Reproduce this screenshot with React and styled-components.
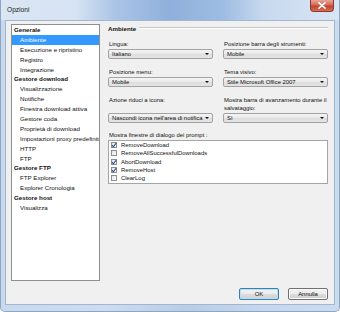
import styled, { createGlobalStyle } from 'styled-components';

const GlobalStyle = createGlobalStyle`
  html, body {
    margin: 0;
    padding: 0;
    background: #ffffff;
  }
  body {
    font-family: 'Liberation Sans', Arial, sans-serif;
  }
`

const tree = [
  { label: 'Generale', group: true },
  { label: 'Ambiente', selected: true },
  { label: 'Esecuzione e ripristino' },
  { label: 'Registro' },
  { label: 'Integrazione' },
  { label: 'Gestore download', group: true },
  { label: 'Visualizzazione' },
  { label: 'Notifiche' },
  { label: 'Finestra download attiva' },
  { label: 'Gestore coda' },
  { label: 'Proprietà di download' },
  { label: 'Impostazioni proxy predefinite' },
  { label: 'HTTP' },
  { label: 'FTP' },
  { label: 'Gestore FTP', group: true },
  { label: 'FTP Explorer' },
  { label: 'Explorer Cronologia' },
  { label: 'Gestore host', group: true },
  { label: 'Visualizza' },
]

const fields = [
  { label: 'Lingua:', value: 'Italiano' },
  { label: 'Posizione barra degli strumenti:', value: 'Mobile' },
  { label: 'Posizione menu:', value: 'Mobile' },
  { label: 'Tema visivo:', value: 'Stile Microsoft Office 2007' },
  { label: 'Azione riduci a icona:', value: "Nascondi icona nell'area di notifica" },
  { label: 'Mostra barra di avanzamento durante il salvataggio:', value: 'Sì' },
]

const prompts = [
  { label: 'RemoveDownload', checked: true },
  { label: 'RemoveAllSuccessfulDownloads', checked: false },
  { label: 'AbortDownload', checked: true },
  { label: 'RemoveHost', checked: true },
  { label: 'ClearLog', checked: false },
]

export default function App() {
  return (
    <>
      <GlobalStyle />
      <Window>
        <TitleBar>
          <Title>Opzioni</Title>
          <CloseButton>
            <svg width="8" height="7" viewBox="0 0 8 7">
              <path d="M1 0.8 L7 6.2 M7 0.8 L1 6.2" stroke="#ffffff" strokeWidth="1.6" strokeLinecap="round" />
            </svg>
          </CloseButton>
        </TitleBar>
        <Client>
          <Main>
            <Tree>
              {tree.map((item) => (
                <TreeRow key={item.label} $group={item.group} $selected={item.selected}>
                  {item.label}
                </TreeRow>
              ))}
            </Tree>
            <Panel>
              <SectionHeader>
                <span>Ambiente</span>
                <Rule />
              </SectionHeader>
              <FieldGrid>
                {fields.map((f) => (
                  <Field key={f.label}>
                    <Label>{f.label}</Label>
                    <Combo>
                      <span>{f.value}</span>
                      <Arrow />
                    </Combo>
                  </Field>
                ))}
              </FieldGrid>
              <ListLabel>Mostra finestre di dialogo dei prompt :</ListLabel>
              <CheckList>
                {prompts.map((p) => (
                  <CheckRow key={p.label}>
                    <Box>
                      {p.checked && (
                        <svg width="6" height="6" viewBox="0 0 6 6">
                          <path d="M1 3.2 L2.4 4.8 L5.2 1" stroke="#2a4f8c" strokeWidth="1.1" fill="none" />
                        </svg>
                      )}
                    </Box>
                    {p.label}
                  </CheckRow>
                ))}
              </CheckList>
            </Panel>
          </Main>
          <Footer>
            <Button $primary>OK</Button>
            <Button>Annulla</Button>
          </Footer>
        </Client>
      </Window>
    </>
  );
}

const Window = styled.div`
  width: 340px;
  height: 312px;
  box-sizing: border-box;
  display: flex;
  flex-direction: column;
  padding: 0 4px 6px 4px;
  background: linear-gradient(to right, #c9d9ee 0%, #cddcf0 30%, #b9cde8 55%, #c7d8ee 80%, #cbdbef 100%);
  border: 1px solid #8ea5c3;
  border-top: none;
  border-radius: 0 0 5px 5px;
`
const TitleBar = styled.div`
  height: 20px;
  display: flex;
  align-items: flex-start;
  justify-content: space-between;
  margin: 0 -4px;
  padding: 0 5px 0 6px;
  background: linear-gradient(to right, #dbe6f4 0%, #d6e3f3 22%, #aac4e6 34%, #8fb0dc 50%, #9fbde3 66%, #c8d9ef 78%, #d9e5f4 100%);
`
const Title = styled.div`
  font-size: 6.6px;
  line-height: 8px;
  margin-top: 6px;
  color: #1a1a1a;
`
const CloseButton = styled.div`
  width: 24px;
  height: 12px;
  box-sizing: border-box;
  display: flex;
  align-items: center;
  justify-content: center;
  background: linear-gradient(#e6a597 0%, #d56b55 45%, #c4412b 55%, #d2705a 100%);
  border: 1px solid #8c3a2e;
  border-top: none;
  border-radius: 0 0 4px 4px;
`
const Client = styled.div`
  flex: 1;
  display: flex;
  flex-direction: column;
  background: #f0f0f0;
  border: 1px solid #a2b6cf;
  padding: 2px 6px 4px 5px;
  font-size: 6.2px;
  color: #111111;
`
const Main = styled.div`
  flex: 1;
  display: flex;
  gap: 8px;
`
const Tree = styled.div`
  width: 89px;
  box-sizing: border-box;
  margin-top: 1px;
  background: #ffffff;
  border: 1px solid #8f8f8f;
  overflow: hidden;
`
const TreeRow = styled.div`
  height: 9.9px;
  line-height: 9.9px;
  white-space: nowrap;
  padding-left: ${(p) => (p.$group ? '2px' : '8px')};
  font-weight: ${(p) => (p.$group ? 'bold' : 'normal')};
  background: ${(p) => (p.$selected ? '#3399ff' : 'transparent')};
  color: ${(p) => (p.$selected ? '#ffffff' : '#111111')};
`
const Panel = styled.div`
  flex: 1;
  display: flex;
  flex-direction: column;
  font-size: 5.9px;
`
const SectionHeader = styled.div`
  display: flex;
  align-items: center;
  gap: 3px;
  height: 8px;
  font-size: 6.2px;
  font-weight: bold;
  margin-top: 1px;
`
const Rule = styled.div`
  flex: 1;
  height: 0;
  border-top: 1px solid #c8c8c8;
  border-bottom: 1px solid #ffffff;
`
const FieldGrid = styled.div`
  display: grid;
  grid-template-columns: 1fr 1fr;
  column-gap: 10px;
  row-gap: 9px;
  margin-top: 8px;
`
const Field = styled.div`
  display: flex;
  flex-direction: column;
`
const Label = styled.div`
  flex: 1;
  line-height: 8px;
  margin-bottom: 1px;
  padding-left: 1px;
`
const Combo = styled.div`
  position: relative;
  height: 10px;
  box-sizing: border-box;
  display: flex;
  align-items: center;
  padding-left: 3px;
  white-space: nowrap;
  overflow: hidden;
  border: 1px solid #a3a3a3;
  border-radius: 2px;
  background: linear-gradient(#f4f4f4, #e9e9e9 50%, #dedede 51%, #e4e4e4);
`
const Arrow = styled.span`
  position: absolute;
  right: 3px;
  top: 3px;
  width: 0;
  height: 0;
  border-left: 2px solid transparent;
  border-right: 2px solid transparent;
  border-top: 2.5px solid #111111;
`
const ListLabel = styled.div`
  line-height: 8px;
  margin-top: 8px;
  padding-left: 1px;
`
const CheckList = styled.div`
  margin-top: 1px;
  background: #ffffff;
  border: 1px solid #a5a5a5;
  padding: 0 0 0 2px;
`
const CheckRow = styled.div`
  height: 8.33px;
  display: flex;
  align-items: center;
  gap: 4px;
  white-space: nowrap;
`
const Box = styled.div`
  width: 6px;
  height: 6px;
  box-sizing: border-box;
  border: 1px solid #8e8f8f;
  background: linear-gradient(135deg, #e4e4e4, #fbfbfb);
  display: flex;
  align-items: center;
  justify-content: center;
  svg {
    margin: -1px;
  }
`
const Footer = styled.div`
  display: flex;
  justify-content: flex-end;
  gap: 9px;
  margin-top: 7px;
`
const Button = styled.div`
  width: 40px;
  height: 12px;
  box-sizing: border-box;
  display: flex;
  align-items: center;
  justify-content: center;
  font-size: 5.9px;
  border: 1px solid ${(p) => (p.$primary ? '#3c7fb1' : '#707070')};
  border-radius: 2px;
  box-shadow: inset 0 0 0 1px ${(p) => (p.$primary ? '#b6e0f7' : '#fbfbfb')};
  background: linear-gradient(#f2f2f2, #ebebeb 50%, #dddddd 51%, #cfcfcf);
`
